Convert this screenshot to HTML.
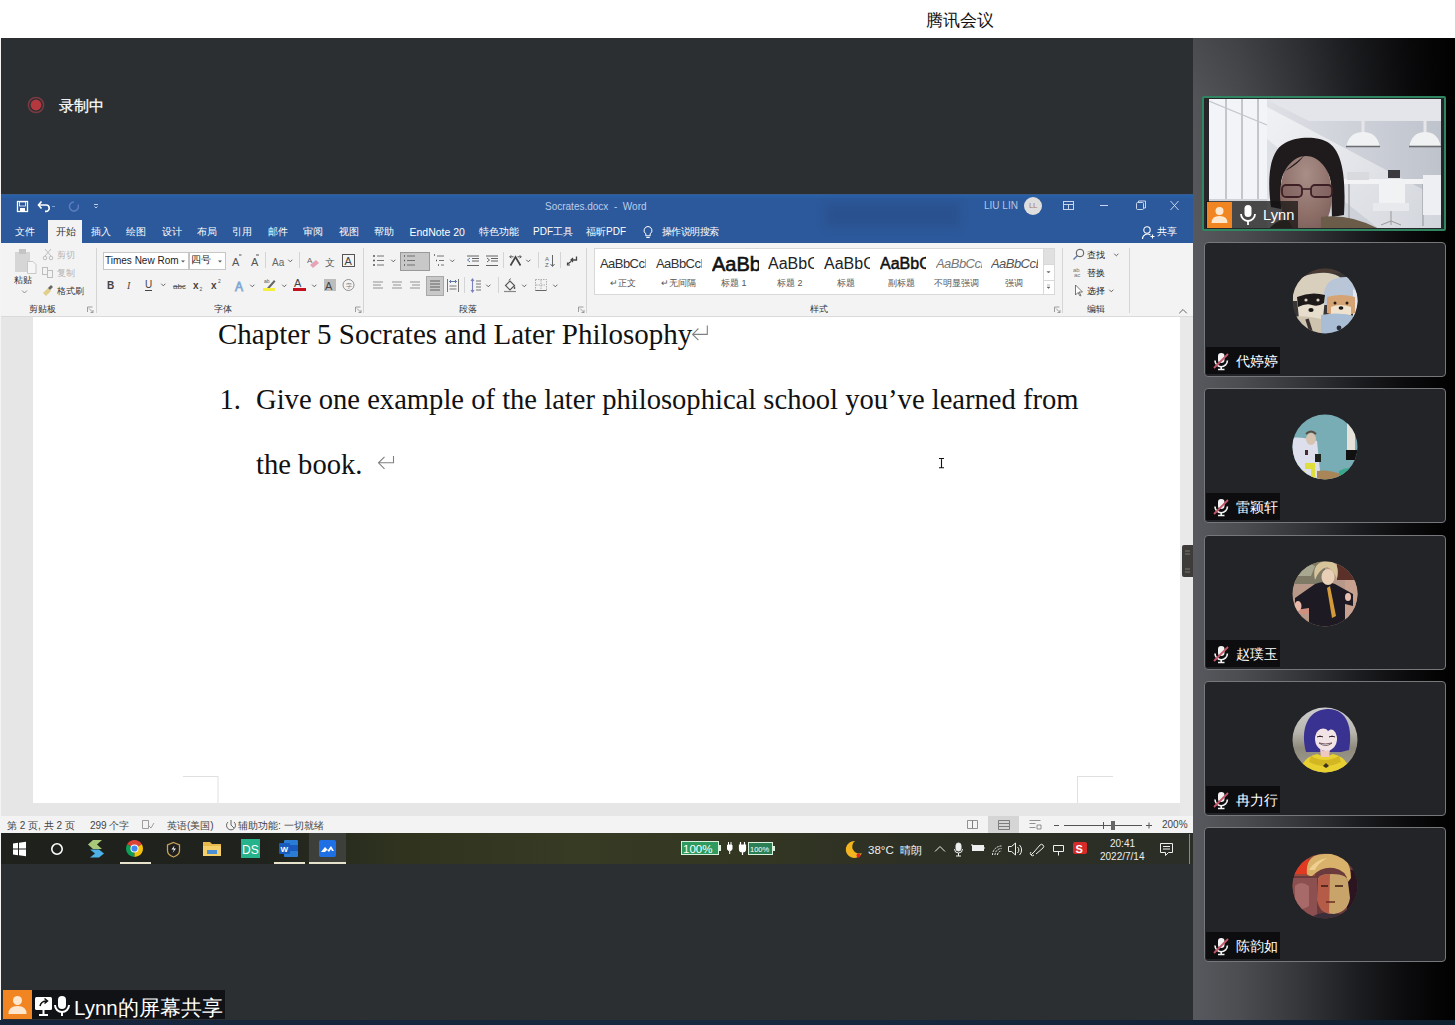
<!DOCTYPE html>
<html><head><meta charset="utf-8">
<style>
*{margin:0;padding:0;box-sizing:border-box}
html,body{width:1455px;height:1025px;overflow:hidden;background:#2c2f32;font-family:"Liberation Sans",sans-serif;position:relative}
.a{position:absolute}
#top{left:0;top:0;width:1455px;height:38px;background:#fff}
#title{left:926px;top:9px;font-size:17px;color:#111;letter-spacing:0px}
#rec{left:0;top:38px;width:1193px;height:156px;background:#2d2f32}
#side{left:1193px;top:38px;width:262px;height:987px;background:linear-gradient(180deg,rgba(0,0,0,0.16) 0,rgba(0,0,0,0.05) 60px,rgba(0,0,0,0) 200px),linear-gradient(90deg,#58595e 0%,#4c4d51 18%,#36373b 40%,#1d1e21 62%,#0b0b0d 82%,#000 100%)}
#word{left:1px;top:194px;width:1192px;height:639px;background:#f3f3f3;overflow:hidden}
#tb{left:1px;top:833px;width:1192px;height:31px;background:linear-gradient(90deg,#1e211c 0%,#20231d 22%,#30341f 34%,#373b24 48%,#333722 62%,#2d3024 76%,#2b2e26 100%)}
#share{left:3px;top:990px;width:222px;height:30px;background:#111215}
.tabs span{position:absolute}
.rl span{position:absolute;font-size:9px;white-space:nowrap;line-height:12px}
.gal div{position:absolute;overflow:hidden;white-space:nowrap;color:#222;line-height:1.2}
.doc{font-family:"Liberation Serif",serif;color:#111;white-space:nowrap;line-height:1.2}
.st span{position:absolute;top:820px;font-size:10px;color:#444;white-space:nowrap;line-height:12px}
</style></head><body>
<div id="top" class="a"></div>
<div id="title" class="a">腾讯会议</div>
<div id="side" class="a"></div>

<div class="a" style="left:1193px;top:1020px;width:262px;height:5px;background:linear-gradient(90deg,#2a3a4a,#1c3046 50%,#0e1c2c)"></div>

<div class="a" style="left:1202px;top:96px;width:244px;height:135px;border:2px solid #2f8660;border-radius:2px;background:#25252a"></div>
<svg class="a" style="left:1209px;top:99px" width="232" height="129" viewBox="0 0 232 129">
 <defs>
  <linearGradient id="wall" x1="0" y1="0" x2="1" y2="0"><stop offset="0" stop-color="#e9ebef"/><stop offset="0.5" stop-color="#d3d6dd"/><stop offset="1" stop-color="#bfc3cc"/></linearGradient>
  <linearGradient id="band" x1="0" y1="0" x2="1" y2="1"><stop offset="0" stop-color="#f2f3f6" stop-opacity="0.9"/><stop offset="1" stop-color="#e4e6ea" stop-opacity="0.5"/></linearGradient>
  <radialGradient id="face" cx="0.5" cy="0.25" r="0.8"><stop offset="0" stop-color="#a88e88"/><stop offset="0.6" stop-color="#8e7069"/><stop offset="1" stop-color="#765a54"/></radialGradient>
 </defs>
 <rect width="232" height="130" fill="url(#wall)"/>
 <path d="M56 0H232V22H100z" fill="#e3e5ea"/>
 <path d="M58 8 L232 100 V130 H170 L58 40z" fill="url(#band)"/>
 <rect x="0" y="0" width="58" height="104" fill="#f3f4f7"/>
 <g stroke="#b4b8c0" stroke-width="1.5"><path d="M17 0v104 M33 0v104 M49 0v104"/></g>
 <path d="M0 2 L58 26" stroke="#c2c6cc" stroke-width="1.2"/>
 <rect x="0" y="100" width="58" height="30" fill="#cfd2d8"/>
 <!-- lamps -->
 <path d="M154 21v13" stroke="#e6e6e8" stroke-width="3"/>
 <path d="M137 48 Q140 33 154 33 Q168 33 171 48z" fill="#f0f1f3"/><path d="M137 47.5h34" stroke="#6a6c70" stroke-width="1.6"/>
 <path d="M216 21v13" stroke="#e6e6e8" stroke-width="3"/>
 <path d="M200 48 Q203 33 216 33 Q229 33 232 48z" fill="#f0f1f3"/><path d="M200 47.5h32" stroke="#6a6c70" stroke-width="1.6"/>
 <!-- furniture -->
 <rect x="134" y="80" width="84" height="5" fill="#f3f3f5"/>
 <path d="M140 85v42 M214 85v42" stroke="#a8aab0" stroke-width="1.5"/>
 <path d="M138 73 h22 v8 h-22z" fill="#d8dade"/>
 <path d="M179 71 h12 v8 h-12z" fill="#3a3a3e"/>
 <path d="M170 80 h26 v26 h-26z" fill="#f1f2f4"/><path d="M164 104 h36 v8 h-36z" fill="#e8e9ec"/>
 <path d="M182 112v14 M172 126l10-4 10 4" stroke="#999" stroke-width="1" fill="none"/>
 <path d="M214 76 h18 v40 h-18z" fill="#eeeff2"/>
 <!-- woman -->
 <path d="M62 108 C58 80 60 52 76 44 C88 37 110 37 120 44 C134 54 137 80 135 116 L123 118 L122 84 C120 64 110 56 97 56 C84 56 74 64 72 84 L72 110z" fill="#1f1a1b"/>
 <ellipse cx="97" cy="96" rx="26" ry="42" fill="url(#face)"/>
 <path d="M71 86 C72 64 84 52 97 52 C110 52 122 64 123 86 C120 70 110 57 97 57 C84 57 74 70 71 86z" fill="#1f1a1b"/>
 <path d="M96 55 C92 62 84 68 76 72 C86 64 92 60 96 55z" fill="#1f1a1b"/>
 <rect x="73" y="86" width="20" height="12" rx="4" fill="#6a4a50" fill-opacity="0.3" stroke="#3c2025" stroke-width="1.8"/>
 <rect x="102" y="86" width="21" height="12" rx="4" fill="#6a4a50" fill-opacity="0.3" stroke="#3c2025" stroke-width="1.8"/>
 <path d="M93 90h9" stroke="#3c2025" stroke-width="1.6"/>
 <path d="M112 118 Q140 114 170 130 H112z" fill="#6a5c48"/>
 <path d="M60 130 Q70 118 80 122 L84 130z" fill="#4a4038"/>
</svg>
<div class="a" style="left:1206px;top:201px;width:92px;height:27px;background:rgba(20,18,18,0.72)"></div>
<div class="a" style="left:1207px;top:202px;width:25px;height:26px;background:#f08522"></div>
<svg class="a" style="left:1207px;top:202px" width="25" height="26" viewBox="0 0 25 26"><circle cx="12.5" cy="9" r="4" fill="#fde8cf"/><path d="M4.5 21 q0 -7 8 -7 q8 0 8 7z" fill="#fde8cf"/></svg>
<svg class="a" style="left:1238px;top:204px" width="20" height="22" viewBox="0 0 20 22"><rect x="6.5" y="1" width="7" height="12" rx="3.5" fill="#fff"/><path d="M3 10a7 7 0 0 0 14 0" stroke="#fff" stroke-width="1.8" fill="none"/><path d="M10 17v4" stroke="#fff" stroke-width="1.8"/></svg>
<div class="a" style="left:1263px;top:206.5px;font-size:14.6px;color:#fff;letter-spacing:0.1px">Lynn</div>


<div class="a" style="left:1204px;top:242px;width:242px;height:135px;border:1px solid #76777a;border-radius:4px;background:#232427"></div>
<svg class="a" style="left:1292px;top:268px" width="66" height="66" viewBox="-33 -33 66 66"><defs><clipPath id="cp0"><circle r="32.5"/></clipPath></defs><g clip-path="url(#cp0)"><rect x="-40" y="-40" width="80" height="80" fill="#3a3636"/>
 <path d="M-40 -40h80v12h-80z" fill="#4a3a34"/>
 <path d="M-32 -4 q-2 -22 26 -24 q22 -2 28 14 l2 14 h-56z" fill="#d9cfbd"/>
 <path d="M-1 -8 q2 -16 22 -16 q14 0 16 14 l4 14 h-42z" fill="#b8c6d8"/>
 <path d="M28 -12 l8 4 v30 l-8 2z" fill="#e4e8ee"/>
 <path d="M-28 -2 q14 -6 28 -2 l-2 22 q-12 4 -24 0z" fill="#e6ddcc"/>
 <path d="M-28 -4 q14 -6 28 -2 l-1 8 q-6 4 -12 2 q-6 -2 -14 2z" fill="#1e1a1a"/>
 <circle cx="-19" cy="-1" r="1.6" fill="#d8d0c0"/><circle cx="-7" cy="-1" r="1.6" fill="#d8d0c0"/>
 <ellipse cx="-14" cy="9" rx="2.6" ry="2" fill="#151212"/>
 <path d="M2 -4 q14 -4 28 0 v16 q-14 6 -28 0z" fill="#d6a474"/>
 <path d="M6 6 q9 -4 20 0 v8 q-10 4 -20 0z" fill="#efe3cf"/>
 <circle cx="10" cy="2" r="1.5" fill="#2a1a14"/><circle cx="22" cy="2" r="1.5" fill="#2a1a14"/>
 <ellipse cx="16" cy="7" rx="2.4" ry="1.8" fill="#1a1412"/>
 <path d="M-34 16 q12 -2 30 2 l2 22 h-32z" fill="#cdc3ae"/>
 <path d="M-18 18 l7 22" stroke="#3a3030" stroke-width="3.5"/>
 <path d="M-4 14 q18 -4 38 2 v24 h-38z" fill="#a9bdd4"/>
 <circle cx="14" cy="27" r="2.4" fill="#2a2e3a"/></g></svg>
<div class="a" style="left:1206px;top:347px;width:74px;height:27px;background:#0d0d0f"></div>
<svg class="a" style="left:1211px;top:351px" width="20" height="20" viewBox="0 0 20 20"><rect x="7" y="2" width="6.5" height="10" rx="3.2" fill="#f2f2f2"/><path d="M4 9.5a6.2 6.2 0 0 0 12.4 0" stroke="#f2f2f2" stroke-width="1.6" fill="none"/><path d="M10.2 15.5v3 M7 18.5h6.5" stroke="#f2f2f2" stroke-width="1.6"/><path d="M3 17 L17 3" stroke="#c4586a" stroke-width="1.8"/></svg>
<div class="a" style="left:1236px;top:353px;font-size:13.5px;color:#fff;white-space:nowrap">代婷婷</div>


<div class="a" style="left:1204px;top:388px;width:242px;height:135px;border:1px solid #76777a;border-radius:4px;background:#232427"></div>
<svg class="a" style="left:1292px;top:414px" width="66" height="66" viewBox="-33 -33 66 66"><defs><clipPath id="cp1"><circle r="32.5"/></clipPath></defs><g clip-path="url(#cp1)"><rect x="-40" y="-40" width="80" height="80" fill="#78adb6"/>
 <path d="M-40 -8 q14 -4 32 2 l4 40 h-36z" fill="#dde0ec"/>
 <ellipse cx="-14" cy="-8" rx="5" ry="6" fill="#d6c4b0"/>
 <path d="M-19 -13 q5 -5 10 0" stroke="#5a4a40" stroke-width="2" fill="none"/>
 <rect x="-20" y="3" width="3" height="5" fill="#4a2a2a"/>
 <rect x="-10" y="7" width="6" height="8" fill="#1e2420"/>
 <path d="M-20 16h10v18h-4v-12h-6z" fill="#dede3c"/>
 <path d="M-30 28 l10 -4 l4 10z" fill="#e6e040"/>
 <path d="M-8 24 q12 -2 26 4 v12 h-26z" fill="#a88658"/>
 <path d="M22 -24 l8 4 v24 h-8z" fill="#e6e2da"/>
 <path d="M21 3 h12 v10 h-12z" fill="#111"/>
 <path d="M14 24 q10 -6 20 0 v16 h-20z" fill="#3aa88c"/></g></svg>
<div class="a" style="left:1206px;top:493px;width:74px;height:27px;background:#0d0d0f"></div>
<svg class="a" style="left:1211px;top:497px" width="20" height="20" viewBox="0 0 20 20"><rect x="7" y="2" width="6.5" height="10" rx="3.2" fill="#f2f2f2"/><path d="M4 9.5a6.2 6.2 0 0 0 12.4 0" stroke="#f2f2f2" stroke-width="1.6" fill="none"/><path d="M10.2 15.5v3 M7 18.5h6.5" stroke="#f2f2f2" stroke-width="1.6"/><path d="M3 17 L17 3" stroke="#c4586a" stroke-width="1.8"/></svg>
<div class="a" style="left:1236px;top:499px;font-size:13.5px;color:#fff;white-space:nowrap">雷颖轩</div>


<div class="a" style="left:1204px;top:535px;width:242px;height:135px;border:1px solid #76777a;border-radius:4px;background:#232427"></div>
<svg class="a" style="left:1292px;top:561px" width="66" height="66" viewBox="-33 -33 66 66"><defs><clipPath id="cp2"><circle r="32.5"/></clipPath></defs><g clip-path="url(#cp2)"><rect x="-40" y="-40" width="80" height="80" fill="#b89888"/>
 <path d="M-40 -40 h40 v30 h-40z" fill="#7e7a66"/>
 <path d="M-30 -28 q10 -6 20 0 l-4 10 h-16z" fill="#a8a890"/>
 <path d="M12 -40 h28 v26 h-28z" fill="#5a3028"/>
 <path d="M20 -14 h20 v40 h-20z" fill="#c8a090"/>
 <path d="M-26 2 h14 v18 h-14z" fill="#d09080"/>
 <path d="M-16 40 v-26 l-14 2 v-12 l20 -14 q10 -4 20 0 l18 10 v12 l-8 -2 v30z" fill="#1e1a24"/>
 <ellipse cx="3" cy="-17" rx="6.5" ry="8" fill="#e8cfb6"/>
 <path d="M-10 -14 q-4 -18 12 -19 q14 0 10 18 q-4 -10 -10 -12 q-8 2 -12 13z" fill="#d8c49a"/>
 <path d="M5 -8 l6 30 l-4 2 l-5 -30z" fill="#d49a3a"/>
 <ellipse cx="-27" cy="12" rx="3.5" ry="5" fill="#e8b8a8"/>
 <ellipse cx="23" cy="3" rx="3" ry="4" fill="#e8c0b0"/></g></svg>
<div class="a" style="left:1206px;top:640px;width:74px;height:27px;background:#0d0d0f"></div>
<svg class="a" style="left:1211px;top:644px" width="20" height="20" viewBox="0 0 20 20"><rect x="7" y="2" width="6.5" height="10" rx="3.2" fill="#f2f2f2"/><path d="M4 9.5a6.2 6.2 0 0 0 12.4 0" stroke="#f2f2f2" stroke-width="1.6" fill="none"/><path d="M10.2 15.5v3 M7 18.5h6.5" stroke="#f2f2f2" stroke-width="1.6"/><path d="M3 17 L17 3" stroke="#c4586a" stroke-width="1.8"/></svg>
<div class="a" style="left:1236px;top:646px;font-size:13.5px;color:#fff;white-space:nowrap">赵璞玉</div>


<div class="a" style="left:1204px;top:681px;width:242px;height:135px;border:1px solid #76777a;border-radius:4px;background:#232427"></div>
<svg class="a" style="left:1292px;top:707px" width="66" height="66" viewBox="-33 -33 66 66"><defs><clipPath id="cp3"><circle r="32.5"/></clipPath></defs><g clip-path="url(#cp3)"><defs><linearGradient id="ag" x1="0" y1="0" x2="0" y2="1"><stop offset="0" stop-color="#d4d4d8"/><stop offset="0.4" stop-color="#b8b6ae"/><stop offset="0.6" stop-color="#8e8a7c"/><stop offset="1" stop-color="#a8a498"/></linearGradient></defs>
 <rect x="-40" y="-40" width="80" height="80" fill="url(#ag)"/>
 <path d="M-19 12 C-25 -10 -18 -30 2 -31 C22 -32 28 -12 24 10 L16 12 L-12 12 Z" fill="#3a3290"/>
 <path d="M-26 40 q0 -22 18 -26 q8 4 16 0 q18 4 18 26z" fill="#e8d030"/>
 <path d="M-14 16 q14 8 28 0 l2 6 q-16 8 -32 0z" fill="#d2b622"/>
 <path d="M-5 9 q5 4 10 0 l-1 8 h-8z" fill="#f0c8c0"/>
 <ellipse cx="1" cy="-1" rx="11" ry="12" fill="#f2e4e6"/>
 <path d="M-12 -4 C-13 -18 -4 -23 4 -23 C15 -23 17 -12 14 -3 C11 -9 7 -13 3 -9 C-1 -14 -8 -11 -12 -4 Z" fill="#3a3290"/>
 <path d="M-6 3 q7 5 13 0 q-7 2 -13 0z" fill="#fff" stroke="#5a3a40" stroke-width="0.8"/>
 <path d="M-8 -3 q3 -2 6 0 M4 -3 q3 -2 6 0" stroke="#3a2a30" stroke-width="1"/>
 <path d="M-2 26 l3 -3 l3 3 l-3 2z" fill="#3a3020"/></g></svg>
<div class="a" style="left:1206px;top:786px;width:74px;height:27px;background:#0d0d0f"></div>
<svg class="a" style="left:1211px;top:790px" width="20" height="20" viewBox="0 0 20 20"><rect x="7" y="2" width="6.5" height="10" rx="3.2" fill="#f2f2f2"/><path d="M4 9.5a6.2 6.2 0 0 0 12.4 0" stroke="#f2f2f2" stroke-width="1.6" fill="none"/><path d="M10.2 15.5v3 M7 18.5h6.5" stroke="#f2f2f2" stroke-width="1.6"/><path d="M3 17 L17 3" stroke="#c4586a" stroke-width="1.8"/></svg>
<div class="a" style="left:1236px;top:792px;font-size:13.5px;color:#fff;white-space:nowrap">冉力行</div>


<div class="a" style="left:1204px;top:827px;width:242px;height:135px;border:1px solid #76777a;border-radius:4px;background:#232427"></div>
<svg class="a" style="left:1292px;top:853px" width="66" height="66" viewBox="-33 -33 66 66"><defs><clipPath id="cp4"><circle r="32.5"/></clipPath></defs><g clip-path="url(#cp4)"><rect x="-40" y="-40" width="80" height="80" fill="#6a3a3c"/>
 <path d="M-40 -40 h30 v30 h-30z" fill="#9a4a3a"/>
 <path d="M-32 -22 q8 -6 18 -4 l-2 14 h-16z" fill="#e03a22"/>
 <path d="M-40 -8 h32 v48 h-32z" fill="#8c5050"/>
 <path d="M-30 0 q6 -6 14 0 v20 q-8 6 -14 0z" fill="#a86a68"/>
 <path d="M22 -16 h18 v56 h-18z" fill="#2a1520"/>
 <path d="M-20 40 q2 -12 24 -14 q22 2 28 14z" fill="#3a2e3a"/>
 <path d="M-7 -6 q0 -6 14 -6 q16 0 16 8 l2 16 q-2 14 -16 16 q-14 0 -16 -14z" fill="#c9a46a"/>
 <path d="M-7 -6 q0 -6 12 -6 l-1 40 q-10 -2 -12 -14z" fill="#b55c48"/>
 <path d="M-18 -12 q-2 -20 18 -20 q26 -2 26 24 l-3 4 q-2 -12 -14 -14 q-12 -2 -22 8 q-4 0 -5 -2z" fill="#d8b26a"/>
 <path d="M-16 -16 q6 -10 18 -12 q-10 6 -12 12z" fill="#f0d090"/>
 <path d="M-4 0 h7 M10 0 h8" stroke="#3a1a12" stroke-width="1.6"/>
 <path d="M1 16 h9" stroke="#6a2a20" stroke-width="1.4"/></g></svg>
<div class="a" style="left:1206px;top:932px;width:74px;height:27px;background:#0d0d0f"></div>
<svg class="a" style="left:1211px;top:936px" width="20" height="20" viewBox="0 0 20 20"><rect x="7" y="2" width="6.5" height="10" rx="3.2" fill="#f2f2f2"/><path d="M4 9.5a6.2 6.2 0 0 0 12.4 0" stroke="#f2f2f2" stroke-width="1.6" fill="none"/><path d="M10.2 15.5v3 M7 18.5h6.5" stroke="#f2f2f2" stroke-width="1.6"/><path d="M3 17 L17 3" stroke="#c4586a" stroke-width="1.8"/></svg>
<div class="a" style="left:1236px;top:938px;font-size:13.5px;color:#fff;white-space:nowrap">陈韵如</div>


<div class="a" style="left:1px;top:194px;width:1192px;height:49px;background:linear-gradient(180deg,#3a5c8c 0,#3a5c8c 1px,#2860a8 1px,#2860a8 3px,#2c599b 4px)"></div>
<div class="a" style="left:825px;top:203px;width:135px;height:24px;background:rgba(25,35,70,0.14);filter:blur(5px)"></div>
<!-- QAT -->
<svg class="a" style="left:14px;top:198px" width="90" height="18" viewBox="0 0 90 18">
 <g fill="none" stroke="#fff" stroke-width="1.3">
  <rect x="3.5" y="3.5" width="10" height="10"/>
 </g>
 <rect x="5.5" y="4" width="6" height="4" fill="#2b5797" stroke="#fff" stroke-width="0.8"/>
 <rect x="6" y="10" width="5" height="3" fill="#fff"/>
 <path d="M25 7 h7 a3.2 3.2 0 0 1 0 6.4 h-1" fill="none" stroke="#fff" stroke-width="1.6"/>
 <path d="M27.5 3.5 L24.5 7 L27.5 10.5" fill="none" stroke="#fff" stroke-width="1.6"/>
 <path d="M38 8.5 h3" stroke="#7d9bd0" stroke-width="1"/>
 <path d="M60 4 a4.5 4.5 0 1 0 4 2.5" fill="none" stroke="#5d7fbf" stroke-width="1.5"/>
 <path d="M80 6.5 h4 M80.5 8.5 l1.5 1.5 l1.5 -1.5" stroke="#d0dcf0" stroke-width="0.9" fill="none"/>
</svg>
<div class="a" style="left:545px;top:201px;font-size:10px;color:#bccdeb;white-space:pre">Socrates.docx  -  Word</div>
<div class="a" style="left:984px;top:200px;font-size:10px;color:#b6c6e4">LIU LIN</div>
<div class="a" style="left:1024px;top:197px;width:18px;height:18px;border-radius:50%;background:#dedede;color:#a8805e;font-size:8px;text-align:center;line-height:18px;letter-spacing:-0.5px">LL</div>
<svg class="a" style="left:1060px;top:197px" width="125" height="18" viewBox="0 0 125 18">
 <g fill="none" stroke="#c8d4ea" stroke-width="1">
  <rect x="3.5" y="4.5" width="10" height="8"/>
  <path d="M3.5 7.5 h10 M8.5 7.5 v5"/>
  <path d="M40 8.5 h8"/>
  <rect x="76.5" y="5.5" width="7" height="7" rx="1"/>
  <path d="M78.5 5.5 v-1.5 h7 v7 h-2"/>
  <path d="M110.5 4 l8 9 M118.5 4 l-8 9"/>
 </g>
</svg>
<!-- tabs -->
<div class="a" style="left:48px;top:220px;width:34px;height:24px;background:#f3f3f3"></div>
<div class="a tabs" style="top:225px;left:0;font-size:10px;color:#fff;white-space:nowrap">
 <span style="left:15px">文件</span><span style="left:56px;color:#333">开始</span><span style="left:91px">插入</span><span style="left:126px">绘图</span><span style="left:162px">设计</span><span style="left:197px">布局</span><span style="left:232px">引用</span><span style="left:268px">邮件</span><span style="left:303px">审阅</span><span style="left:339px">视图</span><span style="left:374px">帮助</span><span style="left:409.5px;top:1px;font-size:10.5px">EndNote 20</span><span style="left:479px">特色功能</span><span style="left:533px">PDF工具</span><span style="left:586px">福昕PDF</span><span style="left:662px;font-size:9.7px;top:0.5px;letter-spacing:-0.55px">操作说明搜索</span><span style="left:1157px">共享</span>
</div>
<svg class="a" style="left:640px;top:224px" width="16" height="16" viewBox="0 0 16 16"><path d="M8 2.5 a4 4 0 0 1 2.2 7.3 v2 h-4.4 v-2 A4 4 0 0 1 8 2.5 z M6.3 13.5 h3.4" fill="none" stroke="#fff" stroke-width="1"/></svg>
<svg class="a" style="left:1141px;top:225px" width="14" height="16" viewBox="0 0 14 16"><circle cx="6" cy="5" r="3.2" fill="none" stroke="#fff" stroke-width="1.1"/><path d="M1.5 14 a5 5 0 0 1 8 -4 M9.5 11.5 h4 M11.5 9.5 v4" fill="none" stroke="#fff" stroke-width="1.1"/></svg>
<!-- ribbon -->
<div class="a" style="left:1px;top:243px;width:1192px;height:74px;background:#f3f3f3;border-bottom:1px solid #dadada"></div>

<!-- RIBBON CONTENT -->
<div class="a rl" style="top:0;left:0">
 <span style="left:14px;top:274px;color:#333">粘贴</span>
 <span style="left:57px;top:249px;color:#b4b4b4">剪切</span>
 <span style="left:57px;top:267px;color:#b4b4b4">复制</span>
 <span style="left:57px;top:285px;color:#333">格式刷</span>
 <span style="left:29px;top:303px;color:#333">剪贴板</span>
 <span style="left:214px;top:303px;color:#333">字体</span>
 <span style="left:459px;top:303px;color:#333">段落</span>
 <span style="left:810px;top:303px;color:#333">样式</span>
 <span style="left:1087px;top:303px;color:#333">编辑</span>
 <span style="left:1087px;top:249px;color:#222">查找</span>
 <span style="left:1087px;top:267px;color:#222">替换</span>
 <span style="left:1087px;top:285px;color:#222">选择</span>
</div>
<svg class="a" style="left:0;top:243px" width="1192" height="73" viewBox="0 243 1192 73">
 <!-- separators -->
 <g stroke="#d4d4d4" stroke-width="1">
  <path d="M96.5 248v65 M363.5 248v65 M586.5 248v65 M1062.5 248v65 M1129.5 248v65"/>
  <path d="M265.5 252v16 M299.5 252v16 M503.5 252v16 M538.5 252v16 M560.5 252v16 M498.5 277v16 M464.5 277v16"/>
 </g>
 <!-- dialog launchers -->
 <g stroke="#888" stroke-width="0.8" fill="none">
  <path d="M87.5 312v-5h5 M89 308.5l4 4 M93 310v2.5h-2.5"/>
  <path d="M355.5 312v-5h5 M357 308.5l4 4 M361 310v2.5h-2.5"/>
  <path d="M578.5 312v-5h5 M580 308.5l4 4 M584 310v2.5h-2.5"/>
  <path d="M1054.5 312v-5h5 M1056 308.5l4 4 M1060 310v2.5h-2.5"/>
 </g>
 <!-- paste -->
 <rect x="15" y="252" width="15" height="20" fill="#d6d6d6"/>
 <rect x="19" y="249" width="7" height="5" fill="#c4c4c4"/>
 <path d="M27.5 261.5h5.5l3 3v9h-8.5z" fill="#f6f6f6" stroke="#c8c8c8"/>
 <path d="M22 290.5l2.5 2.5 2.5-2.5" stroke="#777" fill="none" stroke-width="0.8"/>
 <!-- cut -->
 <g stroke="#bdbdbd" fill="none" stroke-width="1">
  <path d="M45 249l6 7 M51 249l-6 7"/><circle cx="45" cy="258" r="1.8"/><circle cx="51" cy="258" r="1.8"/>
  <rect x="42.5" y="267.5" width="5" height="7"/><rect x="47.5" y="270.5" width="5" height="7"/>
 </g>
 <!-- format painter -->
 <path d="M43 293l5-5 3 3-5 5z" fill="#e0d08a"/><path d="M48 288l3-3 2 2-3 3z" fill="#666"/>
 <!-- font boxes -->
 <rect x="103.5" y="252.5" width="85" height="17" fill="#fff" stroke="#c6c6c6"/>
 <rect x="189.5" y="252.5" width="36" height="17" fill="#fff" stroke="#c6c6c6"/>
 <path d="M181 260.5h4l-2 2z M218 260.5h4l-2 2z" fill="#555"/>
 <!-- chevrons -->
 <g stroke="#555" stroke-width="0.9" fill="none" stroke-linecap="round" stroke-linejoin="round">
  <path d="M161.5 284l1.8 1.8 1.8-1.8 M288.5 260l1.8 1.8 1.8-1.8 M250.5 285l1.8 1.8 1.8-1.8 M282.5 285l1.8 1.8 1.8-1.8 M312.5 285l1.8 1.8 1.8-1.8"/>
  <path d="M391.5 260l1.8 1.8 1.8-1.8 M421.5 260l1.8 1.8 1.8-1.8 M450.5 260l1.8 1.8 1.8-1.8 M526.5 260l1.8 1.8 1.8-1.8"/>
  <path d="M486.5 285l1.8 1.8 1.8-1.8 M522.5 285l1.8 1.8 1.8-1.8 M553.5 285l1.8 1.8 1.8-1.8 M1114.5 254l1.8 1.8 1.8-1.8 M1109.5 290l1.8 1.8 1.8-1.8"/>
  <path d="M1179.5 313l3.5-3.5 3.5 3.5" stroke="#555"/>
 </g>
 <!-- grow/shrink -->
 <text x="232" y="266" font-size="11" fill="#555" font-family="Liberation Sans">A</text>
 <path d="M239 255h2.5" stroke="#555"/>
 <text x="251" y="266" font-size="11" fill="#555" font-family="Liberation Sans">A</text>
 <path d="M256 255h3" stroke="#555"/>
 <text x="272" y="266" font-size="10" fill="#666" font-family="Liberation Sans">Aa</text>
 <!-- clear format -->
 <text x="307" y="263" font-size="8" fill="#666" font-family="Liberation Sans">A</text>
 <path d="M310 265l6-5 3 3-6 5z" fill="#e6a3b6"/>
 <!-- phonetic -->
 <text x="325" y="266" font-size="10" fill="#555">文</text>
 <!-- boxed A -->
 <rect x="342.5" y="254.5" width="12" height="12" fill="none" stroke="#555"/>
 <text x="344.5" y="265" font-size="11" fill="#444" font-family="Liberation Sans">A</text>
 <!-- B I U abc x2 x2 -->
 <text x="107" y="289" font-size="10" font-weight="bold" fill="#444" font-family="Liberation Sans">B</text>
 <text x="127" y="289" font-size="10" font-style="italic" fill="#444" font-family="Liberation Serif">I</text>
 <text x="145" y="288" font-size="10" fill="#444" font-family="Liberation Sans">U</text>
 <path d="M145 290.5h7" stroke="#444"/>
 <text x="173" y="289" font-size="8" fill="#555" font-family="Liberation Sans">abc</text>
 <path d="M173 286.5h12" stroke="#555" stroke-width="0.8"/>
 <text x="193" y="289" font-size="10" fill="#444" font-family="Liberation Sans" font-weight="bold">x</text><text x="199.5" y="291" font-size="5" fill="#555">2</text>
 <text x="211" y="289" font-size="10" fill="#444" font-family="Liberation Sans" font-weight="bold">x</text><text x="218" y="283" font-size="5" fill="#555">2</text>
 <!-- text effects -->
 <text x="235" y="291" font-size="12" fill="#d6e6f6" stroke="#7fa7d2" stroke-width="0.8" font-family="Liberation Sans">A</text>
 <!-- highlighter -->
 <path d="M267 288l7-8 1.5 1.5-7 8z" fill="#666"/><rect x="263" y="288" width="12" height="3" fill="#f4ef3c"/>
 <text x="264" y="283" font-size="5" fill="#555">ab</text>
 <!-- font color -->
 <text x="294" y="287" font-size="11" fill="#444" font-family="Liberation Sans">A</text>
 <rect x="293" y="288" width="13" height="3" fill="#c4101c"/>
 <!-- char shading -->
 <rect x="324" y="279" width="12" height="12" fill="#bdbdbd"/>
 <text x="325" y="290" font-size="11" fill="#444" font-family="Liberation Sans">A</text>
 <!-- enclose -->
 <circle cx="348.5" cy="285" r="5.5" fill="none" stroke="#777" stroke-width="0.8"/>
 <text x="346" y="288" font-size="6" fill="#777">字</text>
 <!-- bullets -->
 <g fill="#555"><circle cx="374" cy="256" r="1"/><circle cx="374" cy="260.5" r="1"/><circle cx="374" cy="265" r="1"/></g>
 <path d="M377 256h7 M377 260.5h7 M377 265h7" stroke="#666" stroke-width="0.9"/>
 <rect x="400.5" y="252.5" width="29" height="18" fill="#c8c8c8" stroke="#999"/>
 <path d="M404 256h1 M404 260.5h1 M404 265h1" stroke="#555" stroke-width="1.3"/>
 <path d="M407 256h8 M407 260.5h8 M407 265h8" stroke="#666" stroke-width="0.9"/>
 <path d="M434 255h1 M436 260.5h1 M438 265h1" stroke="#555" stroke-width="1.3"/>
 <path d="M437 256h7 M439 260.5h5 M441 265h3" stroke="#666" stroke-width="0.9"/>
 <!-- indent -->
 <g stroke="#555" stroke-width="0.9" fill="none">
  <path d="M467 256h12 M472 258.5h7 M472 261h7 M467 265.5h12"/>
  <path d="M470 258l-2.5 2 2.5 2" stroke="#4a6fa5"/>
  <path d="M486 256h12 M491 258.5h7 M491 261h7 M486 265.5h12"/>
  <path d="M487 258l2.5 2 -2.5 2" />
 </g>
 <!-- chinese layout -->
 <path d="M510.5 265.5l5-8.5 5 8.5" stroke="#444" stroke-width="1.7" fill="none"/><path d="M513.5 256.8h-3.5 M511.2 255.3l-1.5 1.5 1.5 1.5 M517.5 256.8h3.5 M519.8 255.3l1.5 1.5-1.5 1.5" stroke="#555" stroke-width="1" fill="none"/>
 <!-- sort -->
 <text x="545" y="261" font-size="6" fill="#666">A</text><text x="545" y="267" font-size="6" fill="#666">Z</text>
 <path d="M552.5 255v11 M550.5 264l2 2.5 2-2.5" stroke="#666" fill="none"/>
 <!-- show marks -->
 <path d="M576.5 256.5v3.5h-5 M573 258l-2 2 2 2" stroke="#444" stroke-width="1.3" fill="none"/><path d="M567 264.5l4-3 M567.5 262.5v2.5h2.5" stroke="#444" stroke-width="1.2" fill="none"/>
 <!-- align -->
 <g stroke="#888" stroke-width="0.9">
  <path d="M373 282h10 M373 285h8 M373 288h10"/>
  <path d="M392 282h10 M393 285h8 M392 288h10"/>
  <path d="M410 282h10 M412 285h8 M410 288h10"/>
 </g>
 <rect x="426.5" y="276.5" width="17" height="19" fill="#c8c8c8" stroke="#a8a8a8"/>
 <path d="M430 281h10 M430 284h10 M430 287h10 M430 290h10" stroke="#555" stroke-width="0.9"/>
 <path d="M447.5 279v13 M458.5 279v13 M449.5 286h7 M449.5 289h7" stroke="#666" stroke-width="0.9"/><path d="M449.5 281.5h7 M451 280l-1.5 1.5 1.5 1.5 M455 280l1.5 1.5-1.5 1.5" stroke="#4a6a9a" stroke-width="0.9" fill="none"/>
 <!-- line spacing -->
 <path d="M471 281l1.5-2 1.5 2 M471 290l1.5 2 1.5-2 M472.5 280v11" stroke="#7a7fc0" fill="none" stroke-width="1.1"/>
 <path d="M476 281h5 M476 284h5 M476 287h5 M476 290h5" stroke="#666" stroke-width="0.9"/>
 <!-- shading -->
 <path d="M505.5 285.5l4.5-4.5 4.5 4.5-4.5 4.5z" fill="none" stroke="#555" stroke-width="1.1"/><path d="M509 280.5l1.5-2" stroke="#555"/><path d="M514.5 286.5v2.5" stroke="#555" stroke-width="1.4"/>
 <path d="M504 291.5h12" stroke="#888" stroke-width="1.2"/>
 <!-- borders -->
 <path d="M535.5 279.5h11v11h-11z M541 280v10 M536 285h10" stroke="#999" stroke-width="0.8" fill="none" stroke-dasharray="1.5 1"/>
 <path d="M535.5 290.5h11" stroke="#666"/>
 <!-- gallery -->
 <rect x="594.5" y="248.5" width="460" height="46" fill="#fff" stroke="#d8d8d8"/>
 <rect x="1043" y="249" width="11" height="15" fill="#e0e0e0"/>
 <path d="M1043.5 249v45 M1043.5 264.5h11 M1043.5 280.5h11" stroke="#d8d8d8"/>
 <path d="M1047 271.5h3l-1.5 1.5z M1047 287h3l-1.5 1.5z M1047 285h3" fill="#666" stroke="#666" stroke-width="0.5"/>
 <!-- search etc -->
 <circle cx="1080" cy="253" r="3.8" fill="none" stroke="#555" stroke-width="1"/>
 <path d="M1077.5 255.5l-4 4" stroke="#5577aa" stroke-width="1.3"/>
 <text x="1073" y="272" font-size="6" fill="#777">ab</text><text x="1074" y="277" font-size="6" fill="#777">ac</text>
 <path d="M1075.5 285v10l2.5-2.5 2 3.5 1-.5-2-3.5h3.5z" fill="#fff" stroke="#555" stroke-width="0.8"/>
</svg>


<div class="a" style="left:105px;top:255px;font-size:10px;color:#222;white-space:nowrap">Times New Rom</div>
<div class="a" style="left:191px;top:254px;font-size:9.5px;color:#222">四号</div>
<!-- gallery items -->
<div class="a gal" style="left:0;top:0">
 <div style="left:600px;top:255.5px;width:46px;font-size:13px;letter-spacing:-0.55px;color:#333">AaBbCcDd</div>
 <div style="left:656px;top:255.5px;width:46px;font-size:13px;letter-spacing:-0.55px;color:#333">AaBbCcDd</div>
 <div style="left:712px;top:252px;width:47px;font-size:20px;-webkit-text-stroke:0.6px #111;color:#111">AaBb</div>
 <div style="left:768px;top:254px;width:46px;font-size:16px;color:#222">AaBbC</div>
 <div style="left:824px;top:254px;width:46px;font-size:16px;color:#222">AaBbC</div>
 <div style="left:880px;top:254px;width:46px;font-size:16px;-webkit-text-stroke:0.5px #111;color:#111">AaBbC</div>
 <div style="left:936px;top:255.5px;width:46px;font-size:13px;letter-spacing:-0.55px;font-style:italic;color:#777">AaBbCcDd</div>
 <div style="left:991px;top:255.5px;width:47px;font-size:13px;letter-spacing:-0.55px;font-style:italic;color:#555">AaBbCcDd</div>
</div>
<div class="a rl" style="left:0;top:0">
 <span style="left:610px;top:277px;color:#555">↵正文</span>
 <span style="left:661px;top:277px;color:#555">↵无间隔</span>
 <span style="left:721px;top:277px;color:#555">标题 1</span>
 <span style="left:777px;top:277px;color:#555">标题 2</span>
 <span style="left:837px;top:277px;color:#555">标题</span>
 <span style="left:888px;top:277px;color:#555">副标题</span>
 <span style="left:934px;top:277px;color:#555">不明显强调</span>
 <span style="left:1005px;top:277px;color:#555">强调</span>
</div>

<!-- doc area -->
<div class="a" style="left:1px;top:317px;width:1179px;height:499px;background:#e6e6e6"></div>
<div class="a" style="left:33px;top:317px;width:1147px;height:486px;background:#fff"></div>
<div class="a" style="left:1180px;top:317px;width:13px;height:499px;background:#e9e9e9"></div>
<!-- status -->
<div class="a" style="left:1px;top:816px;width:1192px;height:17px;background:#f3f3f3"></div>
<div class="a st" style="left:0;top:0">
 <span style="left:7px">第 2 页, 共 2 页</span>
 <span style="left:90px">299 个字</span>
 <span style="left:167px">英语(美国)</span>
 <span style="left:238px">辅助功能: 一切就绪</span>
 <span style="left:1162px;font-size:10px;top:819px">200%</span>
</div>
<svg class="a" style="left:0;top:816px" width="1192" height="17" viewBox="0 816 1192 17">
 <path d="M142.5 820.5h6v8h-6z M149 826l2 2 3-5" stroke="#888" fill="none" stroke-width="0.8"/>
 <path d="M228 822a4.5 4.5 0 1 0 6 0 M231 820v5l3 3" stroke="#555" fill="none" stroke-width="0.9"/>
 <path d="M967.5 820.5h5v8h-5z M972.5 820.5h5v8h-5z" stroke="#777" fill="none" stroke-width="0.8"/>
 <rect x="988" y="816" width="31" height="17" fill="#d5d5d5"/>
 <path d="M998.5 820.5h11v9h-11z M999 823.5h10 M999 826.5h10" stroke="#666" fill="none" stroke-width="0.8"/>
 <path d="M1029.5 820.5h11 M1029.5 823.5h6 M1029.5 827.5h6 M1037 825h4v4h-4z" stroke="#777" fill="none" stroke-width="0.8"/>
 <path d="M1054 825.5h5 M1064 825.5h78 M1103.5 822v7 M1146 825.5h6 M1149 822.5v6" stroke="#555" stroke-width="1"/>
 <rect x="1111" y="821" width="4" height="9" fill="#666"/>
</svg>



<!-- doc text -->
<div class="a doc" style="left:218px;top:316.7px;font-size:29px">Chapter 5 Socrates and Later Philosophy</div>
<div class="a doc" style="left:219.5px;top:383px;font-size:28.6px">1.</div>
<div class="a doc" style="left:256px;top:383px;font-size:28.6px">Give one example of the later philosophical school you’ve learned from</div>
<div class="a doc" style="left:256px;top:447.8px;font-size:28.6px">the book.</div>
<svg class="a" style="left:680px;top:320px" width="40" height="160" viewBox="680 320 40 160"><g stroke="#808080" stroke-width="1.1" fill="none"><path d="M707.3 325.6V334.4H692.6 M698.4 328.5L692.6 334.4L698.4 340.2"/></g></svg>
<svg class="a" style="left:370px;top:450px" width="30" height="25" viewBox="370 450 30 25"><g stroke="#808080" stroke-width="1.1" fill="none"><path d="M393.5 456V462.8H378.5 M384.5 456.8L378.5 462.8L384.5 468.8"/></g></svg>
<svg class="a" style="left:936px;top:455px" width="12" height="16" viewBox="936 455 12 16"><path d="M939 458.5h2l0.5 0.5 0.5-0.5h2 M941.5 459v8.5 M939 467.8h5" stroke="#111" stroke-width="1.1" fill="none"/></svg>
<!-- page corner marks -->
<svg class="a" style="left:170px;top:770px" width="960" height="33"><path d="M13 6.5h35 M48 6v30 M943 6.5h-35 M907.5 6v30" stroke="#e0e0e0" stroke-width="1" fill="none"/></svg>
<!-- scroll thumb -->
<div class="a" style="left:1182px;top:545px;width:11px;height:32px;background:#3d3c3a;border-radius:2px 0 0 2px"></div><svg class="a" style="left:1182px;top:545px" width="11" height="32"><path d="M3 6h5 M3 9h5 M3 24h5 M3 27h5" stroke="#8a8778" stroke-width="0.8"/></svg>

<div id="tb" class="a"></div>
<svg class="a" style="left:1px;top:833px" width="1192" height="31" viewBox="1 833 1192 31">
 <!-- windows -->
 <path d="M13 843.5l5-.7v5.7h-5z M19 842.7l7-1v6.8h-7z M13 849.5h5v5.7l-5-.7z M19 849.5h7v6.8l-7-1z" fill="#fff"/>
 <circle cx="57" cy="849" r="5.2" fill="none" stroke="#fff" stroke-width="1.6"/>
 <!-- S app -->
 <path d="M88 844.5L93 840H102L97 844.5L102 849H93z" fill="#a9c97a"/><path d="M90 849.5H99L104 853.5L99 857.5H90L95 853.5z" fill="#4db3e6"/>
 <!-- chrome -->
 <path d="M134.5 848.5L141.86 844.25A8.5 8.5 0 0 0 127.14 844.25Z" fill="#db4437"/>
 <path d="M134.5 848.5L127.14 844.25A8.5 8.5 0 0 0 134.5 857Z" fill="#0f9d58"/>
 <path d="M134.5 848.5L134.5 857A8.5 8.5 0 0 0 141.86 844.25Z" fill="#f4c20d"/>
 <circle cx="134.5" cy="848.5" r="4" fill="#fff"/><circle cx="134.5" cy="848.5" r="3.1" fill="#4285f4"/>
 <rect x="120" y="862" width="31" height="2" fill="#e6e2cc"/>
 <!-- shield -->
 <path d="M173.5 842.5l6 2.5v5.5c0 3-3 5.5-6 6.5-3-1-6-3.5-6-6.5v-5.5z" fill="#1e1e1e" stroke="#c8a35a" stroke-width="1.3"/>
 <path d="M174.5 845.5l-3 4h2.5l-1.5 3.5 3.5-4.5h-2.5z" fill="#fff"/>
 <!-- folder -->
 <path d="M203 842h7l2 2h9v12h-18z" fill="#e8b84a"/><rect x="203" y="846" width="18" height="10" fill="#f5d06a"/><rect x="207" y="850" width="10" height="4" fill="#4b8fd6"/>
 <!-- DS -->
 <rect x="241" y="839" width="19" height="19" fill="#26b28b"/>
 <text x="242" y="853.5" font-size="12" fill="#fff" font-family="Liberation Sans">DS</text>
 <!-- word -->
 <rect x="284" y="840" width="14" height="17" rx="1" fill="#2b7cd3"/><rect x="284" y="845" width="14" height="6" fill="#185abd"/>
 <rect x="279" y="843" width="11" height="11" rx="1" fill="#185abd"/>
 <text x="280.5" y="852" font-size="8" fill="#fff" font-family="Liberation Sans" font-weight="bold">W</text>
 <rect x="274" y="862" width="31" height="2" fill="#e6e2cc"/>
 <!-- tencent meeting -->
 <rect x="309" y="833" width="37" height="31" fill="#3d403a"/>
 <rect x="319" y="840" width="17" height="17" rx="2" fill="#1f6fe5"/>
 <path d="M321 852l4-5 3 3 3-4 3 5h-2l-1-2-2 3-2-2-2 2z" fill="#fff"/>
 <rect x="309" y="862" width="37" height="2" fill="#e6e2cc"/>
 <!-- battery 1 -->
 <rect x="681.5" y="841.5" width="37" height="13" fill="#2e9a5e" stroke="#d8f0dc" stroke-width="1"/>
 <rect x="719" y="845" width="2" height="6" fill="#d8f0dc"/>
 <text x="683" y="853" font-size="11.5" fill="#fff" font-family="Liberation Sans">100%</text>
 <path d="M727.5 845v4a2.3 2.3 0 0 0 4.5 0v-4z M728.5 842v3 M731 842v3 M729.7 851v3" fill="#fff" stroke="#fff" stroke-width="1"/>
 <path d="M739.5 845v4a3 3 0 0 0 6 0v-4z M740.5 842v3 M744.5 842v3 M742.5 852v3" fill="#fff" stroke="#fff" stroke-width="1.2"/>
 <rect x="748.5" y="842.5" width="24" height="12" fill="#2a7f55" stroke="#d8f0dc" stroke-width="1"/>
 <rect x="773" y="846" width="2" height="5" fill="#d8f0dc"/>
 <text x="750" y="851.5" font-size="7.5" fill="#fff" font-family="Liberation Sans">100%</text>
 <!-- moon -->
 <path d="M855 841a8.5 8.5 0 1 0 7 12 a7 7 0 0 1 -7 -12z" fill="#f2b51f"/>
 <circle cx="858.5" cy="855.5" r="2" fill="#e01e2a"/>
 <text x="868" y="853.5" font-size="11.5" fill="#eee" font-family="Liberation Sans">38°C</text>
 <text x="900" y="853.5" font-size="11" fill="#eee">晴朗</text>
 <!-- tray -->
 <g stroke="#eee" fill="none" stroke-width="1">
  <path d="M935 851.5l5-5 5 5"/>
  <rect x="956" y="843" width="5" height="8" rx="2.5" fill="#eee"/><path d="M954.5 849a4 4 0 0 0 8 0 M958.5 853v3 M956 856h5"/>
  <rect x="972.5" y="845.5" width="11" height="5" fill="#eee"/><path d="M971 845h2 M984 847v2"/>
  <path d="M992.5 855a9 9 0 0 1 9-9 M995 855a6.5 6.5 0 0 1 6.5-6.5 M997.5 855a4 4 0 0 1 4-4" stroke-dasharray="2 1"/>
  <path d="M1008.5 846.5h3l4-3.5v12l-4-3.5h-3z M1017.5 847a4 4 0 0 1 0 6 M1019.5 845a7 7 0 0 1 0 10"/>
  <path d="M1031 855l4-4 M1034 852l6-7 a2 2 0 0 1 3 3l-7 6 M1031 852a2 2 0 1 0 3 3"/>
  <path d="M1053.5 845.5h10v6h-10z M1058.5 851.5v4"/>
 </g>
 <rect x="1073" y="842" width="14" height="12" rx="2" fill="#d72b2b"/>
 <text x="1075.5" y="852.5" font-size="11" fill="#fff" font-family="Liberation Sans" font-weight="bold">S</text>
 <text x="1110" y="846.5" font-size="10" fill="#eee" font-family="Liberation Sans">20:41</text>
 <text x="1100" y="859.5" font-size="10" fill="#eee" font-family="Liberation Sans">2022/7/14</text>
 <path d="M1160.5 843.5h12v9h-4l-3 3v-3h-5z M1163 846.5h7 M1163 849h7" stroke="#eee" fill="none" stroke-width="1"/>
 <path d="M1189.5 834v30" stroke="#8a8a80"/>
</svg>


<svg class="a" style="left:26px;top:95px" width="20" height="20" viewBox="0 0 20 20"><circle cx="10" cy="10" r="7.6" fill="none" stroke="#7a3a42" stroke-width="1.5"/><circle cx="10" cy="10" r="5.4" fill="#b6383f"/></svg>
<div class="a" style="left:59px;top:96.5px;font-size:14.5px;color:#fff;white-space:nowrap;-webkit-text-stroke:0.25px #fff">录制中</div>

<div id="share" class="a" style="left:3px;top:990px;width:222px;height:29px;background:#111215"></div>
<div class="a" style="left:3px;top:990px;width:29px;height:29px;background:#f08522"></div>
<svg class="a" style="left:3px;top:990px" width="29" height="29" viewBox="0 0 29 29"><circle cx="14.5" cy="10.5" r="4.5" fill="#fde8cf"/><path d="M5.5 24 q0 -8 9 -8 q9 0 9 8z" fill="#fde8cf"/></svg>
<svg class="a" style="left:33px;top:995px" width="38" height="22" viewBox="0 0 38 22">
 <rect x="2" y="2" width="17" height="13" rx="1.5" fill="#fff"/><path d="M6 20h9 M10.5 15v5" stroke="#fff" stroke-width="2"/>
 <path d="M7 11 q1 -5 7 -5 M11.5 3.5 l3 2.5 -3 2.5" stroke="#111" stroke-width="1.5" fill="none"/>
 <rect x="25" y="1" width="8" height="13" rx="4" fill="#fff"/><path d="M22 10a7 7 0 0 0 14 0" stroke="#fff" stroke-width="2" fill="none"/><path d="M29 17v4" stroke="#fff" stroke-width="2"/>
</svg>
<div class="a" style="left:74px;top:993.5px;font-size:20.5px;color:#fff;white-space:nowrap">Lynn的屏幕共享</div>

<div class="a" style="left:0;top:38px;width:1px;height:982px;background:#f4f4f4"></div>
<div class="a" style="left:0;top:1020px;width:1455px;height:5px;background:linear-gradient(90deg,#16243a,#17283e 60%,#142236 82%,#10202e)"></div>
</body></html>
